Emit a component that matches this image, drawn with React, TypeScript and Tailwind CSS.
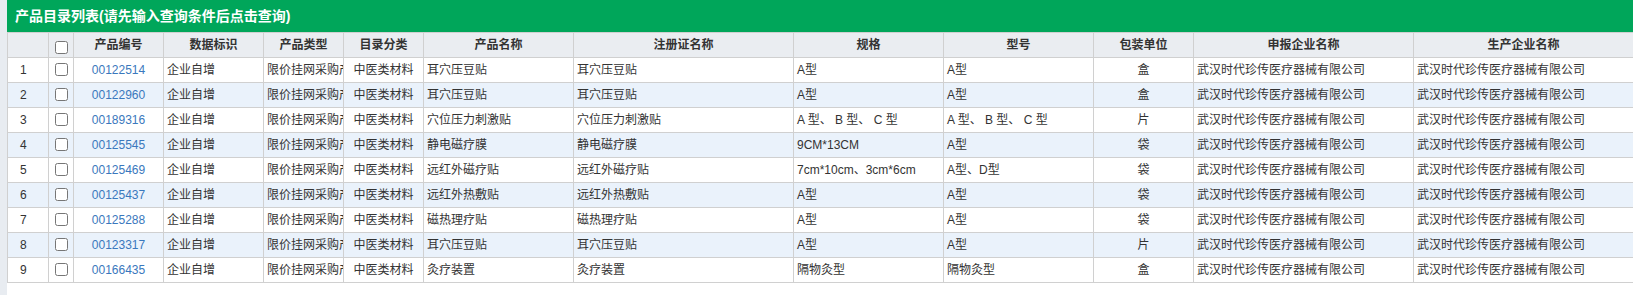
import React from "react";

type Row = {
  code: string;
  name: string;
  reg: string;
  spec: string;
  model: string;
  unit: string;
};

const rows: Row[] = [
  { code: "00122514", name: "耳穴压豆贴", reg: "耳穴压豆贴", spec: "A型", model: "A型", unit: "盒" },
  { code: "00122960", name: "耳穴压豆贴", reg: "耳穴压豆贴", spec: "A型", model: "A型", unit: "盒" },
  { code: "00189316", name: "穴位压力刺激贴", reg: "穴位压力刺激贴", spec: "A 型、 B 型、 C 型", model: "A 型、 B 型、 C 型", unit: "片" },
  { code: "00125545", name: "静电磁疗膜", reg: "静电磁疗膜", spec: "9CM*13CM", model: "A型", unit: "袋" },
  { code: "00125469", name: "远红外磁疗贴", reg: "远红外磁疗贴", spec: "7cm*10cm、3cm*6cm", model: "A型、D型", unit: "袋" },
  { code: "00125437", name: "远红外热敷贴", reg: "远红外热敷贴", spec: "A型", model: "A型", unit: "袋" },
  { code: "00125288", name: "磁热理疗贴", reg: "磁热理疗贴", spec: "A型", model: "A型", unit: "袋" },
  { code: "00123317", name: "耳穴压豆贴", reg: "耳穴压豆贴", spec: "A型", model: "A型", unit: "片" },
  { code: "00166435", name: "灸疗装置", reg: "灸疗装置", spec: "隔物灸型", model: "隔物灸型", unit: "盒" },
];

const company = "武汉时代珍传医疗器械有限公司";

const headers = [
  "产品编号",
  "数据标识",
  "产品类型",
  "目录分类",
  "产品名称",
  "注册证名称",
  "规格",
  "型号",
  "包装单位",
  "申报企业名称",
  "生产企业名称",
];

const widths = [41, 25, 90, 100, 80, 80, 150, 220, 150, 150, 100, 220, 220];

const cell =
  "h-[25px] border border-[#d0d0d0] px-[3px] whitespace-nowrap overflow-hidden align-middle";

export default function App() {
  return (
    <div
      className="flex h-[295px] w-[1633px] overflow-hidden bg-[#e8ecf1] text-[12px] text-[#333]"
      style={{ fontFamily: '"Liberation Sans", "Noto Sans CJK SC", sans-serif' }}
    >
      <div className="w-[7px] shrink-0" />
      <div className="flex min-w-0 flex-1 flex-col bg-white">
        <div className="flex h-[32px] items-center bg-[#00a65a] pl-[8px] text-[14px] font-bold text-white">
          产品目录列表(请先输入查询条件后点击查询)
        </div>
        <div className="overflow-hidden">
          <table className="w-[1626px] table-fixed border-collapse">
            <colgroup>
              {widths.map((w, i) => (
                <col key={i} style={{ width: w }} />
              ))}
            </colgroup>
            <thead>
              <tr className="bg-[#eaedf1]">
                <th className={cell} />
                <th className={`${cell} text-center`}>
                  <input type="checkbox" className="mt-[4px] h-[13px] w-[13px] align-middle" />
                </th>
                {headers.map((h) => (
                  <th key={h} className={`${cell} text-center font-bold text-[#333]`}>
                    {h}
                  </th>
                ))}
              </tr>
            </thead>
            <tbody>
              {rows.map((r, i) => (
                <tr key={r.code} className={i % 2 === 1 ? "bg-[#eaf2fb]" : "bg-white"}>
                  <td className={`${cell} pl-[12px]`}>{i + 1}</td>
                  <td className={`${cell} text-center`}>
                    <input type="checkbox" className="-mt-[3px] h-[13px] w-[13px] align-middle" />
                  </td>
                  <td className={`${cell} text-center`}>
                    <a className="text-[#3a78bd]">{r.code}</a>
                  </td>
                  <td className={cell}>企业自增</td>
                  <td className={`${cell} text-clip`}>限价挂网采购产品</td>
                  <td className={`${cell} text-center`}>中医类材料</td>
                  <td className={cell}>{r.name}</td>
                  <td className={cell}>{r.reg}</td>
                  <td className={cell}>{r.spec}</td>
                  <td className={cell}>{r.model}</td>
                  <td className={`${cell} text-center`}>{r.unit}</td>
                  <td className={cell}>{company}</td>
                  <td className={cell}>{company}</td>
                </tr>
              ))}
            </tbody>
          </table>
        </div>
      </div>
    </div>
  );
}
